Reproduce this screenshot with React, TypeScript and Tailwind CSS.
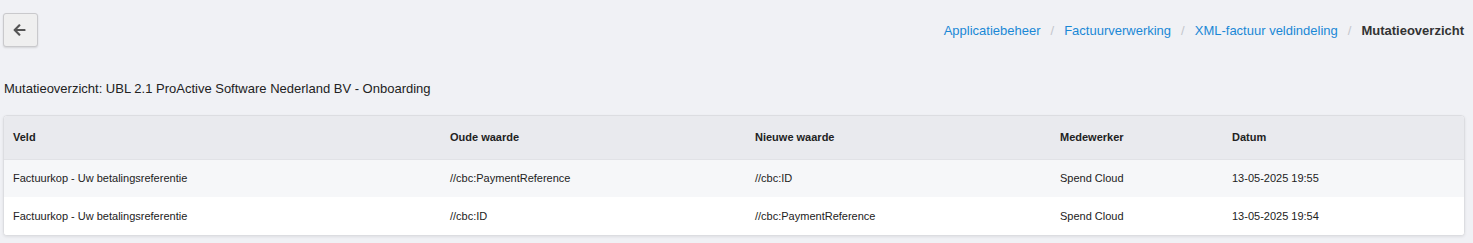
const rows = [
  {
    veld: 'Factuurkop - Uw betalingsreferentie',
    oud: '//cbc:PaymentReference',
    nieuw: '//cbc:ID',
    medewerker: 'Spend Cloud',
    datum: '13-05-2025 19:55',
  },
  {
    veld: 'Factuurkop - Uw betalingsreferentie',
    oud: '//cbc:ID',
    nieuw: '//cbc:PaymentReference',
    medewerker: 'Spend Cloud',
    datum: '13-05-2025 19:54',
  },
];

const crumbs = ['Applicatiebeheer', 'Factuurverwerking', 'XML-factuur veldindeling'];

export default function App() {
  return (
    <div className="min-h-[243px] bg-[#f0f1f5] font-['Liberation_Sans',Arial,sans-serif] text-[#333] pl-[3px] pr-[8px] pt-[13px]">
      {/* kop */}
      <div className="flex items-start justify-between">
        <button className="w-[35px] h-[34px] flex items-center justify-center rounded-[3px] border border-[#c9c9cc] bg-[#efefef] shadow-[0_1px_2px_rgba(0,0,0,0.12)]">
          <svg width="13" height="12" viewBox="0 0 448 448" className="fill-[#555] -ml-[2px]">
            <path d="M257.5 413.7l-22.2 22.2c-9.4 9.4-24.6 9.4-33.9 0L7 241.6c-9.4-9.4-9.4-24.6 0-33.9L201.4 13.3c9.4-9.4 24.6-9.4 33.9 0l22.2 22.2c9.5 9.5 9.3 25-.4 34.3L136.6 184H424c13.3 0 24 10.7 24 24v32c0 13.3-10.7 24-24 24H136.6l120.5 114.8c9.8 9.3 10 24.8.4 34.3z" />
          </svg>
        </button>
        <nav className="flex items-center text-[13px] pt-[8px] pr-[1px]">
          {crumbs.map((c) => (
            <span key={c} className="flex items-center">
              <span className="text-[#1a88d6]">{c}</span>
              <span className="text-[#c4c6cc] px-[10px]">/</span>
            </span>
          ))}
          <span className="font-bold text-[#333]">Mutatieoverzicht</span>
        </nav>
      </div>

      <h1 className="text-[13px] text-[#222] mt-[34px] pl-[1px] leading-[16px]">
        Mutatieoverzicht: UBL 2.1 ProActive Software Nederland BV - Onboarding
      </h1>

      {/* tabel */}
      <div className="mt-[18px] w-[1462px] rounded-[4px] border border-[#dcdde1] bg-white overflow-hidden shadow-[0_1px_3px_rgba(0,0,0,0.08)]">
        <table className="w-full border-collapse text-[11px] text-[#222] table-fixed">
          <colgroup>
            <col className="w-[437px]" />
            <col className="w-[305px]" />
            <col className="w-[305px]" />
            <col className="w-[172px]" />
            <col />
          </colgroup>
          <thead>
            <tr className="bg-[#e9eaee] h-[43px] border-b border-[#e1e2e6]">
              {['Veld', 'Oude waarde', 'Nieuwe waarde', 'Medewerker', 'Datum'].map((h) => (
                <th key={h} className="text-left font-bold pl-[9px] align-middle">
                  {h}
                </th>
              ))}
            </tr>
          </thead>
          <tbody>
            {rows.map((r, i) => (
              <tr key={i} className={i % 2 === 0 ? 'bg-[#f6f7f9] h-[38px]' : 'bg-white h-[38px]'}>
                <td className="pl-[9px]">{r.veld}</td>
                <td className="pl-[9px]">{r.oud}</td>
                <td className="pl-[9px]">{r.nieuw}</td>
                <td className="pl-[9px]">{r.medewerker}</td>
                <td className="pl-[9px]">{r.datum}</td>
              </tr>
            ))}
          </tbody>
        </table>
      </div>
    </div>
  );
}
